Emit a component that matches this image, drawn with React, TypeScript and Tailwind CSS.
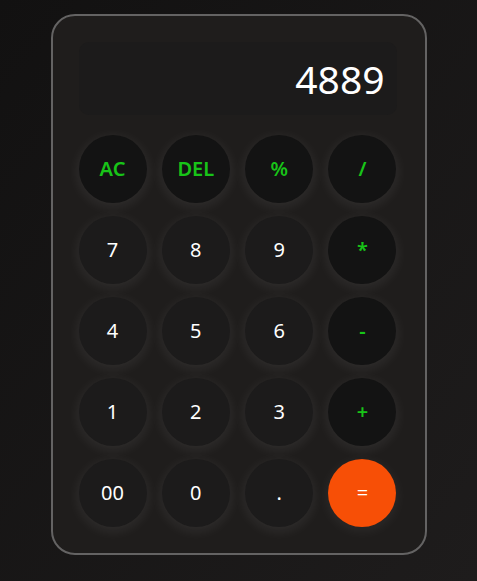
const keys = [
  { label: 'AC', kind: 'op' },
  { label: 'DEL', kind: 'op' },
  { label: '%', kind: 'op' },
  { label: '/', kind: 'op' },
  { label: '7', kind: 'num' },
  { label: '8', kind: 'num' },
  { label: '9', kind: 'num' },
  { label: '*', kind: 'op' },
  { label: '4', kind: 'num' },
  { label: '5', kind: 'num' },
  { label: '6', kind: 'num' },
  { label: '-', kind: 'op' },
  { label: '1', kind: 'num' },
  { label: '2', kind: 'num' },
  { label: '3', kind: 'num' },
  { label: '+', kind: 'op' },
  { label: '00', kind: 'num' },
  { label: '0', kind: 'num' },
  { label: '.', kind: 'num' },
  { label: '=', kind: 'eq' },
]

export default function App() {
  return (
    <div
      className="w-full h-[581px] flex items-start justify-center pt-[14px] bg-gradient-to-br from-[#121111] to-[#1e1c1c]"
      style={{ fontFamily: '"Noto Sans", "Open Sans", sans-serif' }}
    >
      <div className="w-[376px] h-[541px] rounded-[24px] border-2 border-[#646363] bg-[#1f1d1c] pl-[26px] pr-[28px] pt-[26px]">
        <div className="h-[73px] rounded-[10px] bg-[#1c1b1b] flex items-center justify-end pr-[12px]">
          <span className="text-[39px] text-white leading-none">4889</span>
        </div>
        <div className="mt-[20px] grid grid-cols-4 gap-x-[15.3px] gap-y-[13px]">
          {keys.map((k) => (
            <button
              key={k.label}
              className={
                k.kind === 'eq'
                  ? 'w-[68px] h-[68px] rounded-full bg-[#f74f06] text-white text-[20px] shadow-[0_3px_14px_rgba(255,255,255,0.07)]'
                  : k.kind === 'op'
                    ? 'w-[68px] h-[68px] rounded-full bg-[#131313] text-[#18c418] text-[20px] font-semibold shadow-[0_3px_14px_rgba(255,255,255,0.09)]'
                    : 'w-[68px] h-[68px] rounded-full bg-[#1c1b1b] text-white text-[20px] shadow-[0_3px_14px_rgba(255,255,255,0.09)]'
              }
            >
              {k.label}
            </button>
          ))}
        </div>
      </div>
    </div>
  )
}
